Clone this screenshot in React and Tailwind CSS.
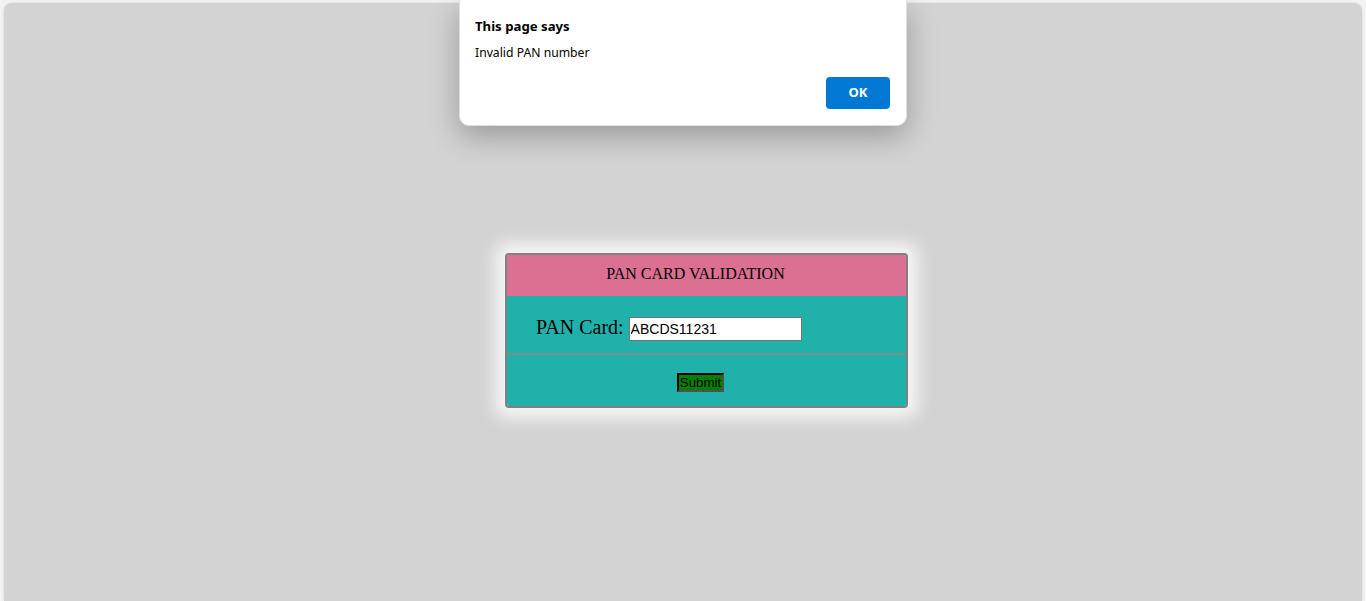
export default function App() {
  return (
    <div className="h-screen w-full overflow-hidden bg-[#f3f3f3] pt-[3px] px-[4px] relative">
      <div className="h-full w-full bg-[#d3d3d3] rounded-t-[8px] shadow-[0_0_3px_rgba(0,0,0,0.12)] pt-[250px] pl-[501px]">
        <div className="w-[403px] border-2 border-[#808080] rounded-[4px] overflow-hidden shadow-[0_0_16px_10px_#f6f6f6] font-['Liberation_Serif',serif] text-black">
          <div className="h-[41px] bg-[#db7093] flex items-center justify-center pr-[22px] pb-[4px] text-[16px]">
            PAN CARD VALIDATION
          </div>
          <div className="h-[57px] bg-[#20b2aa] flex items-center pl-[29px] pt-[10px] pb-[2px]">
            <span className="text-[20px] leading-none mb-[4px]">PAN Card:</span>
            <input
              readOnly
              value="ABCDS11231"
              className="ml-[5px] w-[173px] h-[24px] bg-white border border-[#767676] px-[1px] text-[14px] text-black font-['Liberation_Sans',Arial,sans-serif] outline-none"
            />
          </div>
          <div className="border-t-2 border-[#7f8c8c] h-[53px] bg-[#20b2aa] flex justify-center pr-[12px] pt-[18px]">
            <button className="h-[19px] px-[1px] bg-[#008000] border-2 border-t-black border-l-black border-r-[#505050] border-b-[#505050] text-[13.33px] leading-none text-black font-['Liberation_Sans',Arial,sans-serif]">
              Submit
            </button>
          </div>
        </div>
      </div>

      <div className="absolute left-[459px] top-0 w-[448px] h-[126px] bg-white rounded-b-[10px] shadow-[0_10px_30px_rgba(0,0,0,0.28)] border border-t-0 border-[#e0e0e0] font-['Segoe_UI','Noto_Sans',sans-serif] text-black">
        <div className="pl-[15px] pt-[16px] text-[13.2px] font-bold leading-[20px]">This page says</div>
        <div className="pl-[15px] pt-[8px] text-[12.2px] leading-[18px]">Invalid PAN number</div>
        <div className="flex justify-end pr-[16px] pt-[15px]">
          <button className="w-[64px] h-[32px] bg-[#0078d4] rounded-[4px] text-white text-[13px] font-bold">
            OK
          </button>
        </div>
      </div>
    </div>
  );
}
